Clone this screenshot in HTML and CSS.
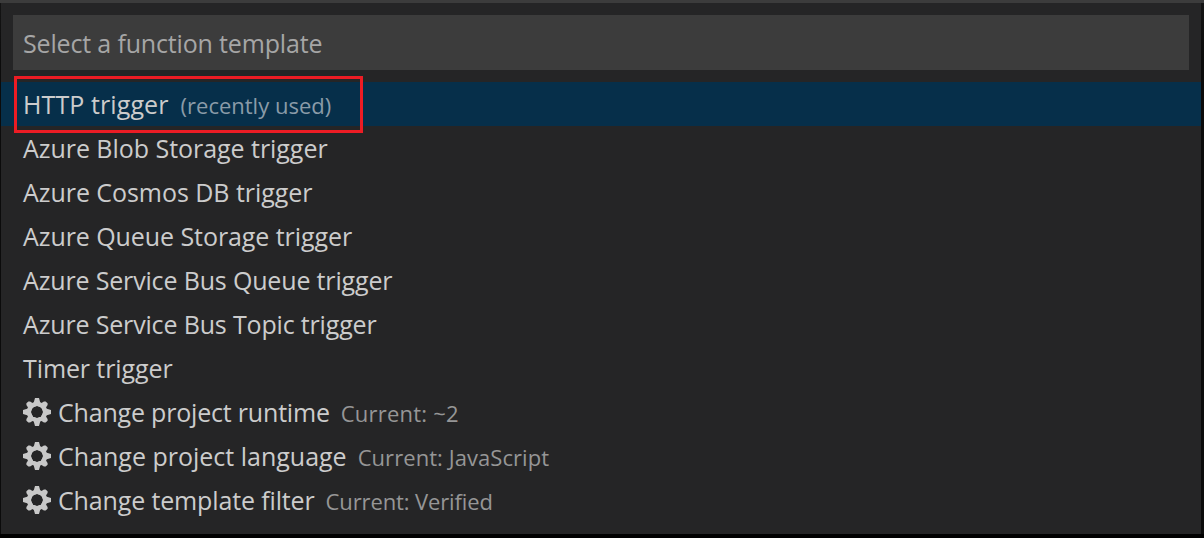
FILE: index.html
```html
<!DOCTYPE html>
<html lang="en">
<head>
<meta charset="utf-8">
<title>Select a function template</title>
<link rel="stylesheet" href="styles.css">
</head>
<body>
<svg class="defs" aria-hidden="true">
  <symbol id="gear" viewBox="-14 -14 28 28">
    <g fill="currentColor">
      <path d="M-3.4-9-2-14H2L3.4-9V9L2 14H-2L-3.4 9Z M-9-3.4-14-2V2L-9 3.4H9L14 2V-2L9-3.4Z" mask="url(#hole)"/>
      <path d="M-3.2-9-2.6-12.4-1.4-13.6H1.4L2.6-12.4 3.2-9V9L2.6 12.4 1.4 13.6H-1.4L-2.6 12.4-3.2 9Z M-9-3.2-12.4-2.6-13.6-1.4V1.4L-12.4 2.6-9 3.2H9L12.4 2.6 13.6 1.4V-1.4L12.4-2.6 9-3.2Z" transform="rotate(45)" mask="url(#hole)"/>
      <circle r="10.2" mask="url(#hole)"/>
    </g>
  </symbol>
  <mask id="hole" maskUnits="userSpaceOnUse" x="-15" y="-15" width="30" height="30">
    <rect x="-15" y="-15" width="30" height="30" fill="#fff"/>
    <circle r="6" fill="#000"/>
  </mask>
</svg>
<main class="picker">
  <div class="search"><span class="placeholder">Select a function template</span></div>
  <ul class="list">
    <li class="row selected"><span class="label http">HTTP trigger</span><span class="note used">(recently used)</span><span class="highlight"></span></li>
    <li class="row"><span class="label blob">Azure Blob Storage trigger</span></li>
    <li class="row"><span class="label cosmos">Azure Cosmos DB trigger</span></li>
    <li class="row"><span class="label queue">Azure Queue Storage trigger</span></li>
    <li class="row"><span class="label bus">Azure Service Bus Queue trigger</span></li>
    <li class="row"><span class="label bus">Azure Service Bus Topic trigger</span></li>
    <li class="row"><span class="label timer">Timer trigger</span></li>
    <li class="row"><svg class="gear"><use href="#gear"/></svg><span class="label runtime">Change project runtime</span><span class="note v2">Current: ~2</span></li>
    <li class="row"><svg class="gear"><use href="#gear"/></svg><span class="label language">Change project language</span><span class="note js">Current: JavaScript</span></li>
    <li class="row"><svg class="gear"><use href="#gear"/></svg><span class="label filter">Change template filter</span><span class="note verified">Current: Verified</span></li>
  </ul>
</main>
</body>
</html>
```
FILE: styles.css
```css
* { box-sizing: border-box; }
body {
  margin: 0;
  height: 538px;
  padding: 3px 3px 4px 1px;
  overflow: hidden;
  background: linear-gradient(#3c3c3c 3px, #141414 3px, #0b0b0b 60px, #0b0b0b 534px, #000 534px);
  font-family: "Open Sans", "Noto Sans", sans-serif;
}
.defs { position: absolute; width: 0; height: 0; }
.picker { height: 531px; background: #252526; padding-top: 12px; }
.search {
  height: 55px;
  margin: 0 12px;
  padding-left: 10px;
  background: #3c3c3c;
  color: #a6a6a6;
  font-size: 25px;
  line-height: 57px;
  letter-spacing: -0.16px;
  white-space: nowrap;
}
.list { list-style: none; margin: 12px 0 0; padding: 0; }
.row {
  position: relative;
  display: flex;
  align-items: baseline;
  height: 44px;
  padding-left: 22px;
  line-height: 44px;
  color: #cccccc;
  white-space: nowrap;
}
.selected { background: #062f4a; }
.label { font-size: 25px; }
.note { font-size: 22px; margin-left: 11px; color: #969696; }
.selected .note { color: #8a9ba8; margin-left: 12px; }
.http { letter-spacing: 0.1px; }
.blob { letter-spacing: -0.04px; }
.cosmos { letter-spacing: -0.05px; }
.queue { letter-spacing: -0.07px; }
.bus { letter-spacing: -0.16px; }
.timer { letter-spacing: -0.1px; }
.runtime { letter-spacing: -0.19px; }
.filter { letter-spacing: -0.14px; }
.v2 { letter-spacing: 0.22px; }
.js { letter-spacing: 0.06px; }
.verified { letter-spacing: -0.12px; }
.gear { width: 28px; height: 28px; margin-right: 7px; align-self: flex-start; margin-top: 8px; color: #c8c8c8; flex: none; }
.highlight {
  position: absolute;
  left: 13px;
  top: -6px;
  width: 349px;
  height: 57px;
  border: 3px solid #ed1c24;
  z-index: 1;
}
```
